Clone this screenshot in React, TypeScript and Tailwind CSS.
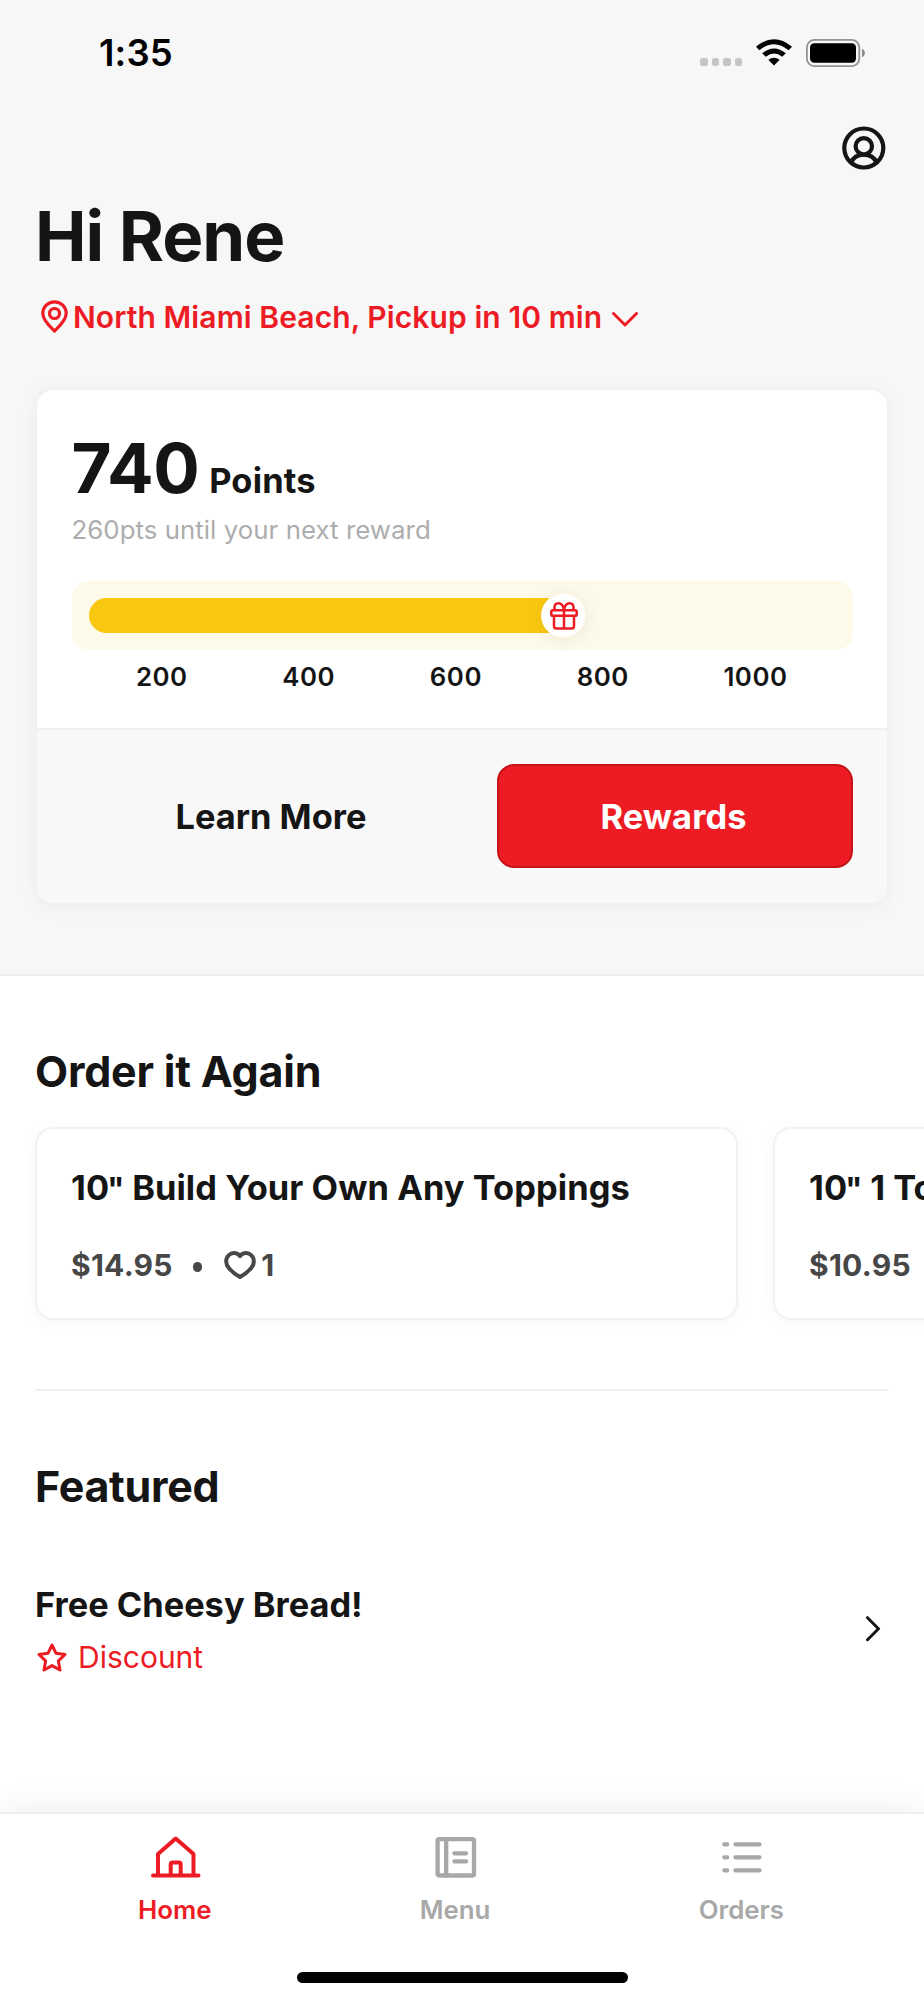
import { useState } from "react";
import type { ReactNode } from "react";

interface OrderItem {
  id: number;
  size: string;
  name: string;
  price: string;
  likes: number;
}

const milestones = [200, 400, 600, 800, 1000];

const recentOrders: OrderItem[] = [
  { id: 1, size: "10", name: "Build Your Own Any Toppings", price: "$14.95", likes: 1 },
  { id: 2, size: "10", name: "1 Topping", price: "$10.95", likes: 1 },
];

const HomeIcon = () => (
  <svg width="50" height="44" viewBox="0 0 50 44" className="ml-[2px]" fill="none" stroke="currentColor" strokeWidth="4" strokeLinecap="round" strokeLinejoin="round">
    <path d="M2 40.5h45.5M7 40V19L24.7 3.5 42.5 19v21M19.7 40V29.5a2 2 0 0 1 2-2h6a2 2 0 0 1 2 2V40" />
  </svg>
);

const MenuIcon = () => (
  <svg width="42" height="44" viewBox="0 0 42 44" className="ml-[1px]" fill="none" stroke="currentColor" strokeWidth="4.3" strokeLinecap="round" strokeLinejoin="round">
    <rect x="2.6" y="4.2" width="36.4" height="36.3" rx="1.6" />
    <path d="M11.2 4.5v36M19.4 18.3h11.7M19.4 26.4h11.7" />
  </svg>
);

const OrdersIcon = () => (
  <svg width="40" height="44" viewBox="0 0 40 44" className="ml-[1px]" fill="none" stroke="currentColor" strokeWidth="4.3" strokeLinecap="round">
    <path d="M2.3 9.3h2.9M13.4 9.3h24.1M2.3 22.3h2.9M13.4 22.3h24.1M2.3 35.3h2.9M13.4 35.3h24.1" />
  </svg>
);

const tabs: { label: string; icon: ReactNode }[] = [
  { label: "Home", icon: <HomeIcon /> },
  { label: "Menu", icon: <MenuIcon /> },
  { label: "Orders", icon: <OrdersIcon /> },
];

function StatusBar() {
  return (
    <div className="flex h-[106px] items-center justify-between pl-[99px] pr-[59px] text-black">
      <span className="text-[36.5px] font-semibold leading-none tracking-[0.005em]">1:35</span>
      <div className="flex h-[30px] items-center">
        <div className="mt-[18px] mr-[14px] flex gap-1">
          {[0, 1, 2, 3].map((i) => (
            <div key={i} className="h-[7.6px] w-[7.5px] rounded-[2.5px] bg-[#c5c5c5]" />
          ))}
        </div>
        <svg width="36" height="28" viewBox="0 0 36 28" className="mr-[14px]">
          <path d="M0 7.7Q18-7.2 36 7.7L32.6 11.3Q18-.8 3.4 11.3Z" />
          <path d="M6.2 14.2Q18 4.6 29.8 14.2L26.2 17.8Q18 11 9.8 17.8Z" />
          <path d="M12.3 20.8Q18 16.6 23.7 20.8L18 26.5Z" />
        </svg>
        <svg width="59" height="28" viewBox="0 0 59 28">
          <rect x=".9" y=".9" width="52.4" height="26.2" rx="7.5" fill="none" stroke="#949494" strokeWidth="1.8" />
          <rect x="4" y="4.2" width="46" height="19.6" rx="4.2" />
          <path d="M56 9.8c3.8 1.6 3.8 6.8 0 8.4z" fill="#8c8c8c" />
        </svg>
      </div>
    </div>
  );
}

function PointsCard() {
  const points = 740;

  return (
    <div className="overflow-hidden rounded-[18px] border-2 border-[#f1f1f1] bg-white shadow-[0_3px_19px_rgba(0,0,0,0.045)]">
      <div className="px-[34.5px] pt-[43px]">
        <div className="flex h-[70px] items-baseline gap-[10px]">
          <span className="text-[69px] font-bold leading-[70px] tracking-[-0.008em]">{points}</span>
          <span className="text-[34.4px] font-bold leading-[40px] tracking-[0.006em]">Points</span>
        </div>
        <p className="mt-[11px] text-[25.8px] font-normal leading-[32px] tracking-[0.002em] text-[#adadad]">
          260pts until your next reward
        </p>

        {/* Progress */}
        <div className="relative mt-[35px] h-[69px] rounded-[17px] bg-[#fefaea] px-[17px] py-[17px]">
          <div
            className="h-[35px] rounded-l-full bg-[#fac710]"
            style={{ width: `${(points / 1000) * 85.5}%` }}
          />
          <div className="absolute left-[469.5px] top-[12px] flex h-[45px] w-[45px] items-center justify-center rounded-full border border-[#fef8e2] bg-white shadow-[0_2px_17px_rgba(0,0,0,0.07)]">
            <svg width="28" height="28" viewBox="0 0 28 28" fill="none" stroke="#ed1c24" strokeWidth="2.5" strokeLinejoin="round">
              <rect x="1.3" y="8.2" width="25.4" height="5.6" rx="1.6" />
              <path d="M4 13.8V24a2.6 2.6 0 0 0 2.6 2.6h14.8A2.6 2.6 0 0 0 24 24V13.8M14 8v18.6" />
              <path d="M14 8C13.4 4 11.4 1.3 8.4 1.3 5 1.3 3.4 4.8 5 8M14 8c.6-4 2.6-6.7 5.6-6.7C23 1.3 24.6 4.8 23 8" />
            </svg>
          </div>
        </div>
        <div className="flex h-[78px] items-start justify-between pl-[64.5px] pr-[65px] pt-[11px]">
          {milestones.map((m) => (
            <span key={m} className="text-[25.8px] font-semibold leading-[32px] tracking-[0.02em]">{m}</span>
          ))}
        </div>
      </div>

      <div className="flex gap-[26px] border-t-2 border-[#f0f0f0] bg-[#f8f8f8] px-[34px] pt-[34px] pb-[35px]">
        <button className="h-[104px] w-[400px] pt-[1px] text-[34.4px] font-bold">Learn More</button>
        <button className="h-[104px] flex-1 rounded-[17px] border-2 border-[#c4141b] bg-[#ed1c24] pt-[1px] pr-[3px] text-[34.4px] font-bold tracking-[0.003em] text-white">
          Rewards
        </button>
      </div>
    </div>
  );
}

function OrderCard({ item }: { item: OrderItem }) {
  return (
    <div className="h-[193px] w-[703px] shrink-0 rounded-[18px] border-2 border-[#f2f2f2] bg-white px-[34px] pt-[39px] shadow-[0_3px_17px_rgba(0,0,0,0.035)]">
      <div className="text-[34.4px] font-bold leading-[40px] tracking-[0.002em] whitespace-nowrap">
        {item.size}
        <span className="-ml-[2px] text-[31px] leading-none tracking-[-0.01em]">"</span> {item.name}
      </div>
      <div className="mt-[38px] flex h-[38px] items-center text-[30px] font-bold text-[#474747]">
        <span className="tracking-[0.009em]">{item.price}</span>
        <span className="mt-[4px] ml-[20px] h-[9.5px] w-[9.5px] rounded-full bg-[#474747]" />
        <svg width="32" height="28" viewBox="0 0 32 28" className="ml-[22px]" fill="none" stroke="currentColor" strokeWidth="4" strokeLinejoin="round">
          <path d="M16 5.2C13.5 1.4 8 1 4.8 4.1 1.2 7.6 1.4 13 4.8 17c3 3.6 6.8 6.6 11.2 9 4.4-2.4 8.2-5.4 11.2-9 3.4-4 3.6-9.4 0-12.9C24 1 18.5 1.4 16 5.2Z" />
        </svg>
        <span className="ml-[5px]">{item.likes}</span>
      </div>
    </div>
  );
}

export default function App() {
  const [activeTab, setActiveTab] = useState("Home");

  return (
    <div className="flex h-[2000px] w-[924px] flex-col overflow-hidden bg-white font-['Inter',sans-serif] text-[#151515]">
      <header className="h-[976px] shrink-0 border-b-2 border-[#eeeeee] bg-[#f7f7f7]">
        <StatusBar />
        <div className="px-[35px]">
          <div className="flex justify-end pt-[20px] pr-[3.5px]">
            <svg width="44" height="44" viewBox="0 0 44 44" fill="none" stroke="currentColor" strokeWidth="4.2" strokeLinecap="round">
              <circle cx="21.8" cy="22" r="19.5" />
              <circle cx="21.8" cy="20.3" r="8.2" />
              <path d="M9 36.5C11.300 31.5 15.800 28.7 21.800 28.7s10.5 2.8 12.8 7.8" />
            </svg>
          </div>
          <h1 className="mt-[26px] text-[69px] font-bold leading-[80px] tracking-[-0.014em]">Hi Rene</h1>
          <button className="mt-[21px] flex h-[40px] items-center text-[30px] font-semibold tracking-[0.003em] text-[#ed1c24]">
            <svg width="27" height="33" viewBox="0 0 27 33" className="ml-[5.5px] mr-[5.5px] mt-[-2px]" fill="none" stroke="currentColor" strokeWidth="3.2" strokeLinejoin="round">
              <path d="M13.5 31C17 27.5 25.2 20.5 25.2 13.5a11.7 11.7 0 0 0-23.4 0C1.8 20.5 10 27.5 13.5 31Z" />
              <circle cx="13.5" cy="13.5" r="5" />
            </svg>
            North Miami Beach, Pickup in 10 min
            <svg width="26" height="15" viewBox="0 0 26 15" className="ml-[10px] mt-[5px]" fill="none" stroke="currentColor" strokeWidth="2.9" strokeLinecap="round" strokeLinejoin="round">
              <path d="M1.5 1.5 13 13 24.5 1.5" />
            </svg>
          </button>
          <div className="mt-[51px]">
            <PointsCard />
          </div>
        </div>
      </header>

      <main className="flex-1 px-[35px]">
        <h2 className="pt-[70px] text-[43px] font-bold leading-[50px] tracking-[-0.005em]">Order it Again</h2>
        <div className="mt-[31px] flex gap-[35px]">
          {recentOrders.map((item) => (
            <OrderCard key={item.id} item={item} />
          ))}
        </div>
        <hr className="mt-[69px] border-t-2 border-[#f0f0f0]" />

        <h2 className="mt-[70px] text-[43px] font-bold leading-[50px] tracking-[-0.007em]">Featured</h2>
        <div className="mt-[74px] flex items-center justify-between pr-[8px]">
          <div>
            <div className="text-[34.4px] font-bold leading-[40px]">Free Cheesy Bread!</div>
            <div className="mt-[12px] flex h-[40px] items-center text-[30px] font-normal text-[#ed1c24]">
              <svg width="30" height="29" viewBox="0 0 30 29" className="ml-[2px] mr-[11px]" fill="none" stroke="currentColor" strokeWidth="3" strokeLinejoin="round">
                <path d="M15 2 18.9 10.2 28 11.5 21.4 17.9 23 27 15 22.6 7 27 8.6 17.9 2 11.5 11.1 10.2Z" />
              </svg>
              Discount
            </div>
          </div>
          <svg width="16" height="26" viewBox="0 0 16 26" className="mt-[-5px]" fill="none" stroke="currentColor" strokeWidth="3" strokeLinecap="round" strokeLinejoin="round">
            <path d="M2.5 1.7 13.5 12.7 2.5 23.7" />
          </svg>
        </div>
      </main>

      {/* Tab bar */}
      <nav className="flex h-[188px] shrink-0 flex-col items-center border-t-2 border-[#eeeeee] bg-white shadow-[0_0_34px_rgba(0,0,0,0.08)]">
        <div className="flex w-full justify-between pl-[138px] pr-[140px] pt-[21px]">
          {tabs.map((tab) => (
            <button
              key={tab.label}
              onClick={() => setActiveTab(tab.label)}
              className={`flex flex-col items-center ${activeTab === tab.label ? "text-[#ed1c24]" : "text-[#a8a8a8]"}`}
            >
              {tab.icon}
              <span className="mt-[15px] text-[25.8px] font-semibold leading-[32px]">{tab.label}</span>
            </button>
          ))}
        </div>
        <div className="mt-auto mb-[17px] h-[11.5px] w-[331px] rounded-full bg-black" />
      </nav>
    </div>
  );
}
